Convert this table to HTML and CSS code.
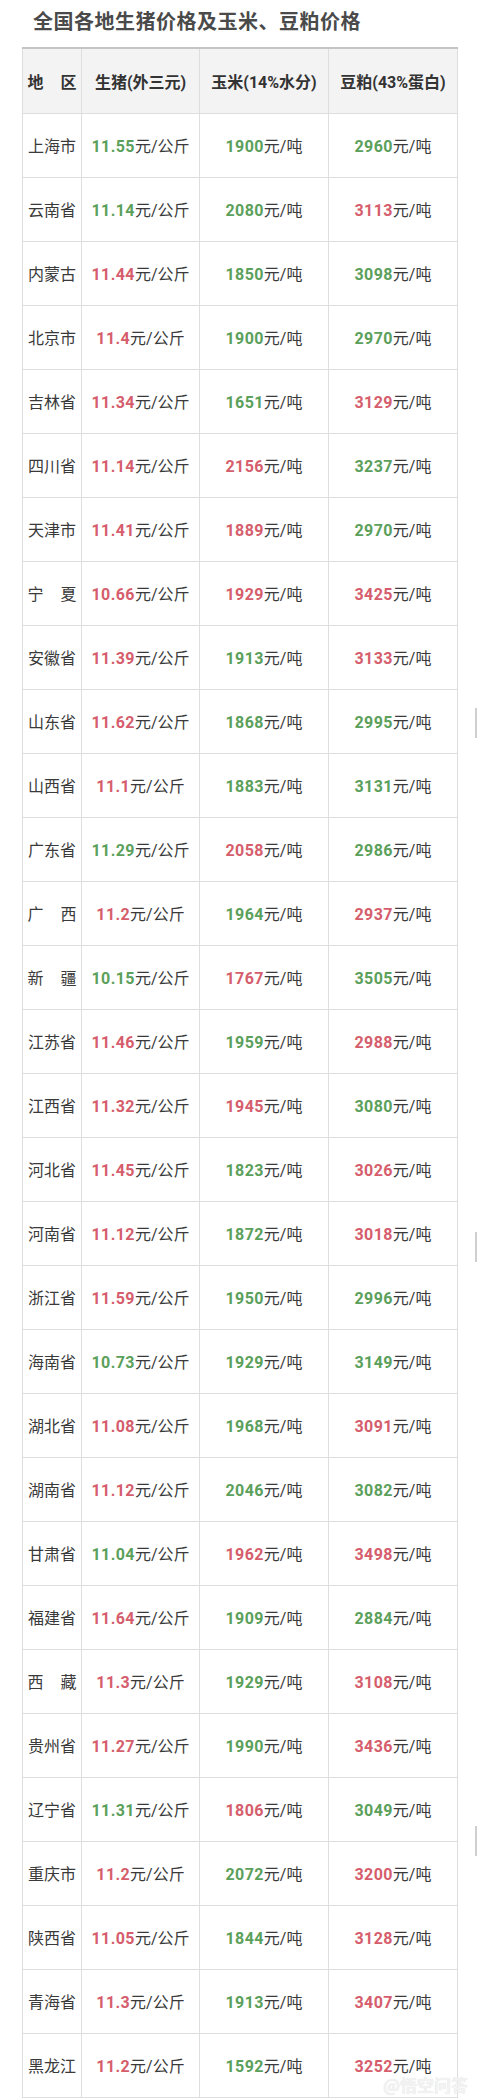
FILE: index.html
```html
<!DOCTYPE html>
<html lang="zh-CN">
<head>
<meta charset="utf-8">
<title>全国各地生猪价格及玉米、豆粕价格</title>
<link rel="stylesheet" href="styles.css">
</head>
<body>
<div class="page">
  <h1 class="title">全国各地生猪价格及玉米、豆粕价格</h1>
  <table class="prices">
    <colgroup><col class="c1"><col class="c2"><col class="c3"><col class="c4"></colgroup>
    <thead>
      <tr><th><span class="sp">地区</span></th><th>生猪(外三元)</th><th>玉米(14%水分)</th><th>豆粕(43%蛋白)</th></tr>
    </thead>
    <tbody>
      <tr><td>上海市</td><td><b class="g">11.55</b>元/公斤</td><td><b class="g">1900</b>元/吨</td><td><b class="g">2960</b>元/吨</td></tr>
      <tr><td>云南省</td><td><b class="g">11.14</b>元/公斤</td><td><b class="g">2080</b>元/吨</td><td><b class="r">3113</b>元/吨</td></tr>
      <tr><td>内蒙古</td><td><b class="r">11.44</b>元/公斤</td><td><b class="g">1850</b>元/吨</td><td><b class="g">3098</b>元/吨</td></tr>
      <tr><td>北京市</td><td><b class="r">11.4</b>元/公斤</td><td><b class="g">1900</b>元/吨</td><td><b class="g">2970</b>元/吨</td></tr>
      <tr><td>吉林省</td><td><b class="r">11.34</b>元/公斤</td><td><b class="g">1651</b>元/吨</td><td><b class="r">3129</b>元/吨</td></tr>
      <tr><td>四川省</td><td><b class="r">11.14</b>元/公斤</td><td><b class="r">2156</b>元/吨</td><td><b class="g">3237</b>元/吨</td></tr>
      <tr><td>天津市</td><td><b class="r">11.41</b>元/公斤</td><td><b class="r">1889</b>元/吨</td><td><b class="g">2970</b>元/吨</td></tr>
      <tr><td><span class="sp">宁夏</span></td><td><b class="r">10.66</b>元/公斤</td><td><b class="r">1929</b>元/吨</td><td><b class="r">3425</b>元/吨</td></tr>
      <tr><td>安徽省</td><td><b class="r">11.39</b>元/公斤</td><td><b class="g">1913</b>元/吨</td><td><b class="r">3133</b>元/吨</td></tr>
      <tr><td>山东省</td><td><b class="r">11.62</b>元/公斤</td><td><b class="g">1868</b>元/吨</td><td><b class="g">2995</b>元/吨</td></tr>
      <tr><td>山西省</td><td><b class="r">11.1</b>元/公斤</td><td><b class="g">1883</b>元/吨</td><td><b class="g">3131</b>元/吨</td></tr>
      <tr><td>广东省</td><td><b class="g">11.29</b>元/公斤</td><td><b class="r">2058</b>元/吨</td><td><b class="g">2986</b>元/吨</td></tr>
      <tr><td><span class="sp">广西</span></td><td><b class="r">11.2</b>元/公斤</td><td><b class="g">1964</b>元/吨</td><td><b class="r">2937</b>元/吨</td></tr>
      <tr><td><span class="sp">新疆</span></td><td><b class="g">10.15</b>元/公斤</td><td><b class="r">1767</b>元/吨</td><td><b class="g">3505</b>元/吨</td></tr>
      <tr><td>江苏省</td><td><b class="r">11.46</b>元/公斤</td><td><b class="g">1959</b>元/吨</td><td><b class="r">2988</b>元/吨</td></tr>
      <tr><td>江西省</td><td><b class="r">11.32</b>元/公斤</td><td><b class="r">1945</b>元/吨</td><td><b class="g">3080</b>元/吨</td></tr>
      <tr><td>河北省</td><td><b class="r">11.45</b>元/公斤</td><td><b class="g">1823</b>元/吨</td><td><b class="r">3026</b>元/吨</td></tr>
      <tr><td>河南省</td><td><b class="r">11.12</b>元/公斤</td><td><b class="g">1872</b>元/吨</td><td><b class="r">3018</b>元/吨</td></tr>
      <tr><td>浙江省</td><td><b class="r">11.59</b>元/公斤</td><td><b class="g">1950</b>元/吨</td><td><b class="g">2996</b>元/吨</td></tr>
      <tr><td>海南省</td><td><b class="g">10.73</b>元/公斤</td><td><b class="g">1929</b>元/吨</td><td><b class="g">3149</b>元/吨</td></tr>
      <tr><td>湖北省</td><td><b class="r">11.08</b>元/公斤</td><td><b class="g">1968</b>元/吨</td><td><b class="r">3091</b>元/吨</td></tr>
      <tr><td>湖南省</td><td><b class="r">11.12</b>元/公斤</td><td><b class="g">2046</b>元/吨</td><td><b class="g">3082</b>元/吨</td></tr>
      <tr><td>甘肃省</td><td><b class="g">11.04</b>元/公斤</td><td><b class="r">1962</b>元/吨</td><td><b class="r">3498</b>元/吨</td></tr>
      <tr><td>福建省</td><td><b class="r">11.64</b>元/公斤</td><td><b class="g">1909</b>元/吨</td><td><b class="g">2884</b>元/吨</td></tr>
      <tr><td><span class="sp">西藏</span></td><td><b class="r">11.3</b>元/公斤</td><td><b class="g">1929</b>元/吨</td><td><b class="r">3108</b>元/吨</td></tr>
      <tr><td>贵州省</td><td><b class="r">11.27</b>元/公斤</td><td><b class="g">1990</b>元/吨</td><td><b class="r">3436</b>元/吨</td></tr>
      <tr><td>辽宁省</td><td><b class="g">11.31</b>元/公斤</td><td><b class="r">1806</b>元/吨</td><td><b class="g">3049</b>元/吨</td></tr>
      <tr><td>重庆市</td><td><b class="r">11.2</b>元/公斤</td><td><b class="g">2072</b>元/吨</td><td><b class="r">3200</b>元/吨</td></tr>
      <tr><td>陕西省</td><td><b class="r">11.05</b>元/公斤</td><td><b class="g">1844</b>元/吨</td><td><b class="r">3128</b>元/吨</td></tr>
      <tr><td>青海省</td><td><b class="r">11.3</b>元/公斤</td><td><b class="g">1913</b>元/吨</td><td><b class="r">3407</b>元/吨</td></tr>
      <tr><td>黑龙江</td><td><b class="r">11.2</b>元/公斤</td><td><b class="g">1592</b>元/吨</td><td><b class="r">3252</b>元/吨</td></tr>
    </tbody>
  </table>
  <div class="scroll s1"></div>
  <div class="scroll s2"></div>
  <div class="scroll s3"></div>
  <div class="watermark">@悟空问答</div>
</div>
</body>
</html>
```

FILE: styles.css
```css
html, body {
  margin: 0;
  padding: 0;
  background: #ffffff;
}
.page {
  position: relative;
  width: 480px;
  height: 2100px;
  padding-left: 22px;
  box-sizing: border-box;
  font-family: Roboto, "Noto Sans CJK SC", sans-serif;
  color: #333;
}
.title {
  margin: 0;
  padding: 7px 0 0 11px;
  font-size: 20px;
  line-height: 28px;
  font-weight: 700;
  color: #4a4a4a;
  font-family: "Noto Sans CJK SC", sans-serif;
  letter-spacing: 0.5px;
}
.prices {
  margin-top: 12px;
  border-collapse: collapse;
  table-layout: fixed;
  width: 436px;
  font-size: 16px;
}
.c1 { width: 59px; }
.c2 { width: 118px; }
.c3 { width: 129px; }
.c4 { width: 129px; }
.prices th, .prices td {
  border: 1px solid #dedede;
  text-align: center;
  padding: 0;
  white-space: nowrap;
  font-family: Roboto, "Noto Sans CJK SC", sans-serif;
}
.prices thead tr {
  height: 65px;
}
.prices th {
  background: #f3f3f3;
  font-weight: 700;
  color: #333;
  border-top: 2px solid #c4c4c4;
}
.prices tbody tr {
  height: 64px;
}
.prices td {
  color: #3a3a3a;
  background: #fff;
}
.prices b {
  font-weight: 700;
  letter-spacing: 0.4px;
}
.g { color: #5ba05b; }
.r { color: #d55d6c; }
.sp {
  display: inline-block;
  letter-spacing: 17px;
  margin-right: -17px;
}
.scroll {
  position: absolute;
  right: 3px;
  width: 2px;
  height: 30px;
  background: #cfcfcf;
}
.s1 { top: 708px; }
.s2 { top: 1232px; }
.s3 { top: 1826px; }
.watermark {
  position: absolute;
  right: 12px;
  top: 2072px;
  font-size: 17px;
  color: #f2f2f2;
  font-family: "Noto Sans CJK SC", sans-serif;
  font-weight: 700;
  text-shadow: 0 0 1px #e0e0e0;
}
```
